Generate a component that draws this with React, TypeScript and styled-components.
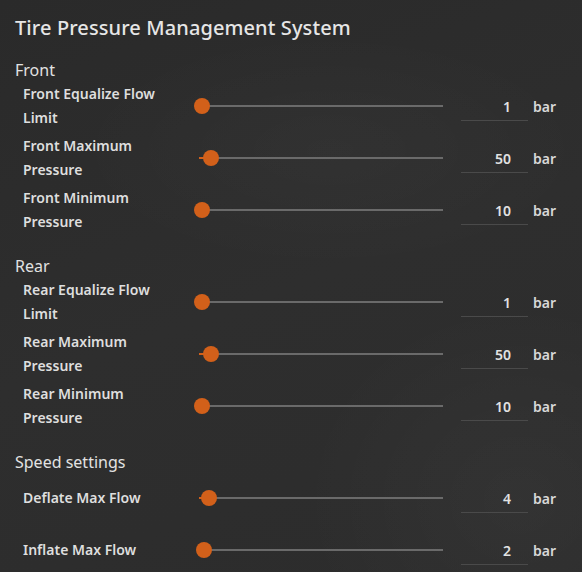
import React from 'react';
import styled, { createGlobalStyle } from 'styled-components';

interface ISetting {
  label: string;
  value: number;
  max: number;
}

interface ISection {
  title: string;
  settings: ISetting[];
}

const sections: ISection[] = [
  {
    title: 'Front',
    settings: [
      { label: 'Front Equalize Flow Limit', value: 1, max: 100 },
      { label: 'Front Maximum Pressure', value: 50, max: 1000 },
      { label: 'Front Minimum Pressure', value: 10, max: 1000 },
    ],
  },
  {
    title: 'Rear',
    settings: [
      { label: 'Rear Equalize Flow Limit', value: 1, max: 100 },
      { label: 'Rear Maximum Pressure', value: 50, max: 1000 },
      { label: 'Rear Minimum Pressure', value: 10, max: 1000 },
    ],
  },
  {
    title: 'Speed settings',
    settings: [
      { label: 'Deflate Max Flow', value: 4, max: 100 },
      { label: 'Inflate Max Flow', value: 2, max: 100 },
    ],
  },
];

const GlobalStyle = createGlobalStyle`
  html, body {
    margin: 0;
    padding: 0;
    background: #2c2c2c;
  }
  body {
    font-family: 'Noto Sans', 'Open Sans', sans-serif;
    color: #e2e2e2;
  }
`;

const Page = styled.div`
  width: 582px;
  height: 572px;
  overflow: hidden;
  box-sizing: border-box;
  padding: 14px 0 0 15px;
  background:
    radial-gradient(ellipse 260px 120px at 330px 150px, rgba(255, 255, 255, 0.025), transparent),
    radial-gradient(ellipse 220px 200px at 520px 500px, rgba(255, 255, 255, 0.03), transparent),
    linear-gradient(160deg, #2a2a2a 0%, #2e2e2e 50%, #2c2c2c 100%);
`;

const Title = styled.h1`
  margin: 0 0 16px;
  font-size: 20px;
  line-height: 28px;
  font-weight: 500;
  letter-spacing: 0.1px;
  color: #e6e6e6;
`;

const Section = styled.section`
  & + & {
    margin-top: 20px;
  }
`;

const SectionTitle = styled.h2`
  margin: 0;
  font-size: 16px;
  line-height: 24px;
  font-weight: 400;
  color: #e2e2e2;
`;

const Rows = styled.div`
  display: flex;
  flex-direction: column;
  gap: 4px;
`;

const Row = styled.div`
  display: grid;
  grid-template-columns: 176px 244px 85px auto;
  align-items: center;
  min-height: 48px;
  padding-left: 8px;
`;

const Label = styled.div`
  max-width: 150px;
  font-size: 14px;
  line-height: 24px;
  font-weight: 600;
  color: #dedede;
`;

const SliderTrack = styled.div`
  position: relative;
  height: 2px;
  background: #6a6a6a;
`;

const SliderFill = styled.div`
  position: absolute;
  left: 0;
  top: 0;
  height: 2px;
  background: #d2601a;
`;

const SliderThumb = styled.div`
  position: absolute;
  top: 50%;
  width: 16px;
  height: 16px;
  margin: -8px 0 0 -8px;
  border-radius: 50%;
  background: #d2601a;
`;

const NumberField = styled.div`
  margin-left: 18px;
  height: 28px;
  box-sizing: border-box;
  padding-right: 17px;
  border-bottom: 1px solid #4a4a4a;
  text-align: right;
  font-size: 14px;
  line-height: 28px;
  font-weight: 600;
  color: #e2e2e2;
  transform: translateY(1px);
`;

const Unit = styled.span`
  margin-left: 5px;
  font-size: 14px;
  font-weight: 600;
  color: #d8d8d8;
`;

const Slider = ({ value, max }: { value: number; max: number }) => {
  const pct = Math.max((value / max) * 100, 1.3);
  return (
    <SliderTrack>
      <SliderFill style={{ width: `${pct}%` }} />
      <SliderThumb style={{ left: `${pct}%` }} />
    </SliderTrack>
  );
};

const App = () => (
  <Page>
    <GlobalStyle />
    <Title>Tire Pressure Management System</Title>
    {sections.map((section) => (
      <Section key={section.title}>
        <SectionTitle>{section.title}</SectionTitle>
        <Rows>
          {section.settings.map((s) => (
            <Row key={s.label}>
              <Label>{s.label}</Label>
              <Slider value={s.value} max={s.max} />
              <NumberField>{s.value}</NumberField>
              <Unit>bar</Unit>
            </Row>
          ))}
        </Rows>
      </Section>
    ))}
  </Page>
);

export default App;
